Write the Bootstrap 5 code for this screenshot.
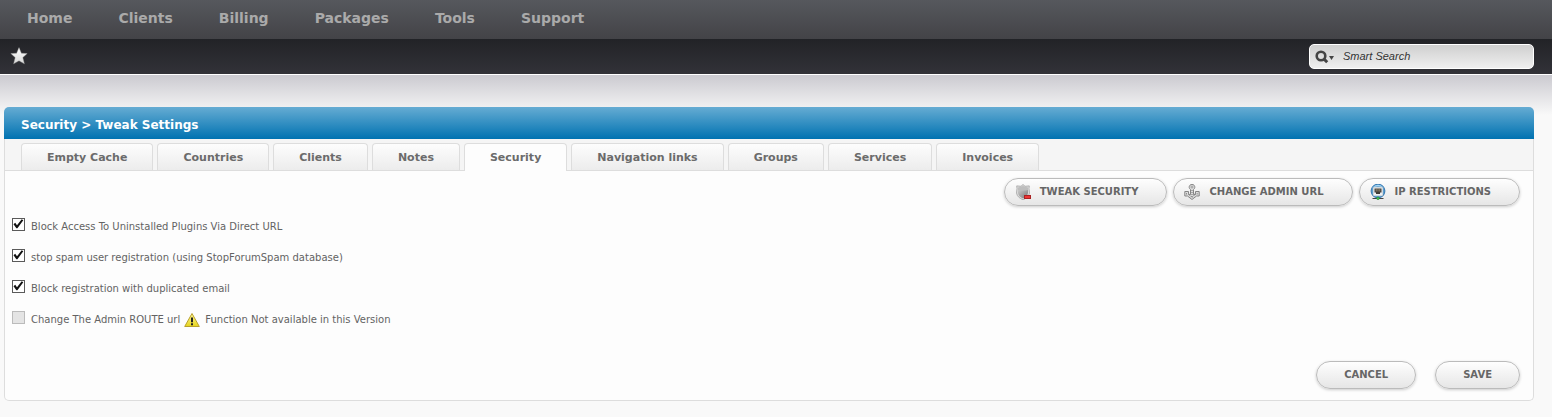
<!DOCTYPE html>
<html lang="en">
<head>
<meta charset="utf-8">
<meta name="viewport" content="width=device-width, initial-scale=1">
<title>Security &gt; Tweak Settings</title>
<link href="https://cdn.jsdelivr.net/npm/bootstrap@5.3.0/dist/css/bootstrap.min.css" rel="stylesheet">
<style>
body { font-family: "DejaVu Sans", Verdana, sans-serif; font-size: 10px; line-height: 16px; color: #636363; background: #f9f9f9; }
.top-menu { min-height: 39px; padding: 0 4px 2px; background: linear-gradient(#56585d, #434347); }
.top-menu .nav-link { padding: 0 23px; font-size: 14px; line-height: 36px; font-weight: 700; color: #aaa; }
.tool-bar { height: 36px; padding: 0 18px 0 10px; background: linear-gradient(#222327, #323238); border-bottom: 1px solid #fff; }
.tool-bar .star-link { padding-bottom: 2px; line-height: 0; }
.smart-search { width: 225px; height: 25px; padding: 0 5px; border: 1px solid #fff; border-radius: 5px; background: linear-gradient(#cfcfcf, #efefef); }
.smart-search input { min-width: 0; margin: 0 0 2px 8px; padding: 0; border: 0; background: none; font: italic 11px/16px "Liberation Sans", Arial, sans-serif; color: #333; }
.smart-search input::placeholder { color: #333; opacity: 1; }
main { padding: 32px 18px 16px 4px; background: linear-gradient(#cbcad0, #f9f9f9 40px); }
.panel-title { margin: 0; padding: 2px 17px 0; border-radius: 5px 5px 0 0; background: linear-gradient(#66acd3, #0072b1); color: #fff; font-size: 12px; line-height: 32px; font-weight: 700; height: 32px; }
.panel-box { border: 1px solid #ddd; border-top: 0; border-radius: 0 0 5px 5px; background: #fdfdfd; }
.tab-strip { gap: 4px; padding: 4px 16px 0; border-bottom: 1px solid #ddd; background: #f5f5f5; }
.tab-strip .nav-link { height: 27px; padding: 0 25px; border: 1px solid #ddd; border-bottom: 0; border-radius: 4px 4px 0 0; background: linear-gradient(#fdfdfd, #ececec); color: #6b6b6b; font-size: 11px; line-height: 27px; font-weight: 700; }
.tab-strip .nav-link.active { height: 28px; margin-bottom: -1px; background: #fdfdfd; color: #6b6b6b; }
.pill { --bs-btn-color: #666; --bs-btn-font-size: 10px; --bs-btn-font-weight: 700; --bs-btn-line-height: 16px; --bs-btn-border-color: #bbb; height: 28px; padding: 0 27px; border-radius: 14px; background: linear-gradient(#fefefe, #e6e6e6); box-shadow: 0 1px 3px #0003; text-transform: uppercase; }
.action-row { gap: 6px; padding: 7px 13px 0; }
.pill-icon { gap: 9px; padding: 0 28px 0 10px; }
.options { gap: 15px; padding: 13px 7px 0; }
.option { gap: 6px; height: 16px; }
.option .form-check-input { width: 13px; height: 13px; margin: 0 0 6px; border: 1px solid #5a5a5a; border-radius: 0; background-color: #fff; background-size: 13px; }
.option .form-check-input:checked { background-image: url("data:image/svg+xml,%3Csvg xmlns='http://www.w3.org/2000/svg' viewBox='0 0 13 13'%3E%3Cpath d='M1.5 6.2 3.2 4.8 5 7.3 9.7 1.2 11.3 2.2 5.4 10.2H4.4Z' fill='%23111'/%3E%3C/svg%3E"); }
.option .form-check-input:disabled { border-color: #bbb; background-color: #e4e4e4; opacity: 1; }
.option .form-check-input:disabled ~ label { opacity: 1; }
.unavailable { gap: 5px; margin-left: -2px; }
.form-actions { gap: 19px; padding: 33px 13px 11px; }
</style>
</head>
<body>
<header>
<nav class="top-menu nav" aria-label="Main">
<a class="nav-link" href="#">Home</a>
<a class="nav-link" href="#">Clients</a>
<a class="nav-link" href="#">Billing</a>
<a class="nav-link" href="#">Packages</a>
<a class="nav-link" href="#">Tools</a>
<a class="nav-link" href="#">Support</a>
</nav>
<div class="tool-bar d-flex align-items-center justify-content-between">
<a class="star-link" href="#" aria-label="Favorites"><svg width="18" height="18" viewBox="0 0 18 18"><defs><linearGradient id="silver" x2="0" y2="1"><stop stop-color="#fff"/><stop offset="1" stop-color="#d8d8d8"/></linearGradient></defs><path d="M9 .6 11.4 6.2 17.2 6.6 12.8 10.6 14.4 16.8 9 13.8 3.6 16.8 5.2 10.6.8 6.6 6.6 6.2Z" fill="url(#silver)" stroke="#999" stroke-width=".4"/></svg></a>
<form class="smart-search d-flex align-items-center" role="search">
<svg width="20" height="14" viewBox="0 0 20 14" aria-hidden="true"><circle cx="6" cy="6" r="4.3" fill="none" stroke="#444" stroke-width="2.6"/><path d="M8.6 8.6 12.2 12.2" stroke="#444" stroke-width="3"/><path d="M14 6h5l-2.5 4z" fill="#444"/></svg>
<input class="flex-grow-1" type="text" placeholder="Smart Search" aria-label="Smart Search">
</form>
</div>
</header>
<main>
<h1 class="panel-title">Security &gt; Tweak Settings</h1>
<section class="panel-box">
<nav class="tab-strip nav" aria-label="Settings">
<a class="nav-link" href="#">Empty Cache</a>
<a class="nav-link" href="#">Countries</a>
<a class="nav-link" href="#">Clients</a>
<a class="nav-link" href="#">Notes</a>
<a class="nav-link active" aria-current="page" href="#">Security</a>
<a class="nav-link" href="#">Navigation links</a>
<a class="nav-link" href="#">Groups</a>
<a class="nav-link" href="#">Services</a>
<a class="nav-link" href="#">Invoices</a>
</nav>
<form>
<div class="action-row d-flex flex-wrap justify-content-end">
<button type="button" class="btn pill pill-icon d-flex align-items-center">
<svg width="16" height="16" viewBox="0 0 16 16" aria-hidden="true"><defs><linearGradient id="steel" x2="1" y2="1"><stop stop-color="#ccc"/><stop offset="1" stop-color="#777"/></linearGradient></defs><path d="M8 .5 10 2.3 14.3 1.9 14 4.5 14.5 9C14 12.5 11 14.5 8 15.8 5 14.5 2 12.5 1.5 9L2 4.5 1.7 1.9 6 2.3Z" fill="#ddd" stroke="#aaa" stroke-width=".9"/><path d="M3 5.5C6 6.2 10 6.2 13 5.5V9C12.5 12 10.5 13.3 8 14.5 5.5 13.3 3.5 12 3 9Z" fill="url(#steel)"/><path d="M3 3.5 8 2 13 3.5V6C10 6.8 6 6.8 3 6Z" fill="#bdbdbd"/><rect x="9.5" y="11.5" width="6" height="3" fill="#e33" stroke="#a22"/></svg>
Tweak Security</button>
<button type="button" class="btn pill pill-icon d-flex align-items-center">
<svg width="16" height="16" viewBox="0 0 16 16" aria-hidden="true"><path d="M.8 7.500H4.500V10.500H6.500V5.500A2.800 2.800 0 1 1 9.500 5.500V10.500H11.500V7.500H15.200V12H12.500L8 15.500 3.500 12H.8Z" fill="#ddd" stroke="#858585"/><circle cx="8" cy="3" r="1" fill="#fff" stroke="#858585" stroke-width=".8"/><path d="M8 6V14M2 9.700H4.500L8 13.500 11.500 9.700H14" fill="none" stroke="#909090" stroke-width="1.400" stroke-dasharray="1 1"/></svg>
Change Admin URL</button>
<button type="button" class="btn pill pill-icon d-flex align-items-center">
<svg width="16" height="16" viewBox="0 0 16 16" aria-hidden="true"><circle cx="8" cy="7" r="6.9" fill="#5aa5dd" stroke="#3475ae"/><path d="M3 4Q8-1 13 4" fill="none" stroke="#a9d8f5" stroke-width="1.5"/><rect x="3" y="3" width="10" height="9" rx="1" fill="#eef1f3" stroke="#7590a5" stroke-width=".5"/><path d="M4.5 4.5H11.5V8.5H10V10H6V8.5H4.500Z" fill="#403c38"/><path d="M6.2 4.5V7.5M8 4.5V7.5M9.8 4.5V7.5" stroke="#b7aa89" stroke-width=".7"/><path d="M2.5 14.5H13.5" stroke="#444"/><circle cx="8" cy="14.3" r="1.4" fill="#3cc34e" stroke="#247731" stroke-width=".5"/></svg>
IP Restrictions</button>
</div>
<div class="options d-flex flex-column">
<div class="option d-flex align-items-center"><input class="form-check-input" type="checkbox" id="plugins" checked><label for="plugins">Block Access To Uninstalled Plugins Via Direct URL</label></div>
<div class="option d-flex align-items-center"><input class="form-check-input" type="checkbox" id="spam" checked><label for="spam">stop spam user registration (using StopForumSpam database)</label></div>
<div class="option d-flex align-items-center"><input class="form-check-input" type="checkbox" id="duplicate" checked><label for="duplicate">Block registration with duplicated email</label></div>
<div class="option d-flex align-items-center"><input class="form-check-input" type="checkbox" id="route" disabled><label for="route">Change The Admin ROUTE url</label>
<span class="unavailable d-flex align-items-center"><svg width="16" height="16" viewBox="0 0 16 16" aria-hidden="true"><defs><linearGradient id="amber" x2="0" y2="1"><stop stop-color="#fff59a"/><stop offset="1" stop-color="#e5d51b"/></linearGradient></defs><path d="M8 1.5 15.3 14.5H.7Z" fill="url(#amber)" stroke="#b9a12a" stroke-linejoin="round"/><path d="M8 5.5V10.3M8 11.3V13.3" stroke="#222" stroke-width="2"/></svg>Function Not available in this Version</span></div>
</div>
<div class="form-actions d-flex justify-content-end">
<button type="button" class="btn pill">Cancel</button>
<button type="submit" class="btn pill">Save</button>
</div>
</form>
</section>
</main>
<script src="https://cdn.jsdelivr.net/npm/bootstrap@5.3.0/dist/js/bootstrap.bundle.min.js"></script>
</body>
</html>
